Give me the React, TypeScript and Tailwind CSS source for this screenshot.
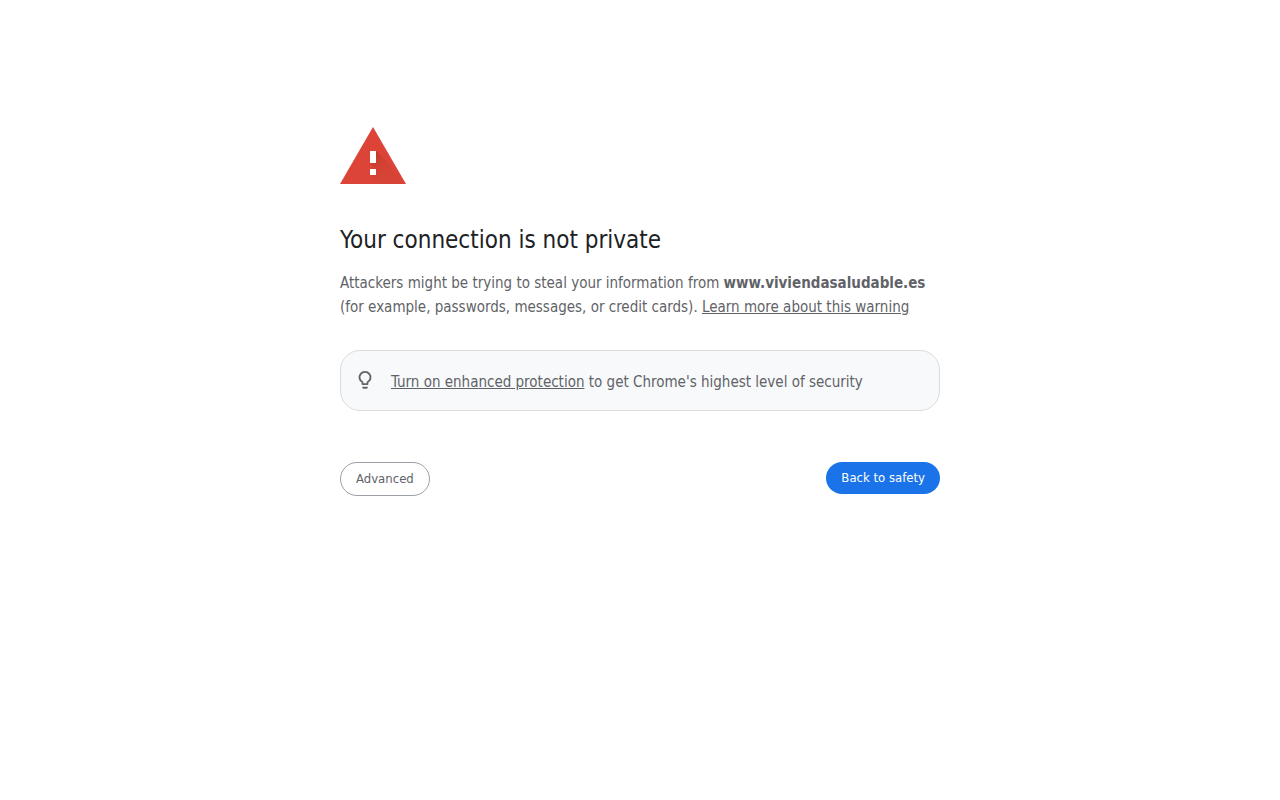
function WarningIcon() {
  return (
    <svg viewBox="0 0 72 72" className="block size-18" role="img" aria-label="Warning">
      <defs>
        <linearGradient id="warning-shade" gradientUnits="userSpaceOnUse" x1="33" y1="45" x2="47" y2="59">
          <stop offset="0" stopColor="#b5382a" stopOpacity="0.8" />
          <stop offset="0.4" stopColor="#c43d2f" stopOpacity="0.55" />
          <stop offset="1" stopColor="#d04133" stopOpacity="0.4" />
        </linearGradient>
      </defs>
      <path d="M0 72 33 15 66 72Z" fill="#db4437" />
      <path d="M36 39 56 59 64 72H39L30 63 36 57 30 51Z" fill="url(#warning-shade)" />
      <path d="M30 39h6v12h-6zM30 57h6v6h-6z" fill="#fff" />
    </svg>
  );
}

function BulbIcon() {
  return (
    <svg viewBox="0 0.5 20 20" className="size-5 shrink-0" fill="none" aria-hidden="true">
      <path
        d="M7.5 14.6v-1.8A5.5 5.5 0 1 1 12.5 12.8v1.8z"
        stroke="#5f6368"
        strokeWidth="1.8"
        strokeLinejoin="round"
      />
      <path d="M7.3 17.3h5.4v.4a1.5 1.5 0 0 1-1.5 1.5H8.8a1.5 1.5 0 0 1-1.5-1.5z" fill="#5f6368" />
    </svg>
  );
}

export default function App() {
  return (
    <main className="min-h-screen bg-white px-6 pt-28 font-['DejaVu_Sans_Condensed','Noto_Sans',sans-serif] text-[15px] leading-6 text-[#5f6368]">
      <div className="mx-auto max-w-[600px]">
        <WarningIcon />
        <h1 className="mt-10 text-2xl leading-8 text-[#202124]">Your connection is not private</h1>
        <p className="mt-[15px]">
          Attackers might be trying to steal your information from{' '}
          <strong>www.viviendasaludable.es</strong> (for example, passwords, messages, or credit cards).{' '}
          <a href="#learn-more" className="underline">
            Learn more about this warning
          </a>
        </p>
        <div className="mt-[31px] flex items-start gap-4 rounded-[20px] border border-[#dadce0] bg-[#f8f9fa] px-3.5 pt-[19px] pb-4">
          <BulbIcon />
          <p>
            <a href="#enhanced-protection" className="underline">
              Turn on enhanced protection
            </a>{' '}
            to get Chrome's highest level of security
          </p>
        </div>
        <div className="mt-[51px] flex items-start justify-between text-[13px] leading-4">
          <button type="button" className="rounded-full border border-[#9aa0a6] bg-white px-[15px] py-2">
            Advanced
          </button>
          <button type="button" className="rounded-full bg-[#1a73e8] px-[15px] py-2 text-white">
            Back to safety
          </button>
        </div>
      </div>
    </main>
  );
}
